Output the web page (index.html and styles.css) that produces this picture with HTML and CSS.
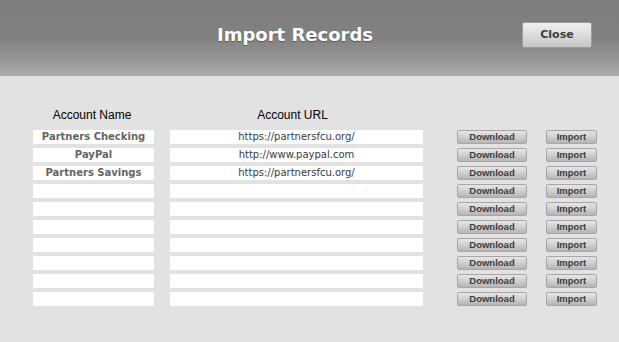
FILE: index.html
```html
<!DOCTYPE html>
<html>
<head>
<meta charset="utf-8">
<link rel="stylesheet" href="styles.css">
</head>
<body>
<div class="header">
  <div class="title">Import Records</div>
  <button class="close">Close</button>
</div>
<div class="content">
  <div class="grid">
    <div class="colhead">Account Name</div>
    <div class="colhead">Account URL</div>
    <div></div>
    <div></div>

    <div class="field name">Partners Checking</div>
    <div class="field url">https://partnersfcu.org/</div>
    <button class="btn dl">Download</button>
    <button class="btn imp">Import</button>

    <div class="field name">PayPal</div>
    <div class="field url">http://www.paypal.com</div>
    <button class="btn dl">Download</button>
    <button class="btn imp">Import</button>

    <div class="field name">Partners Savings</div>
    <div class="field url">https://partnersfcu.org/</div>
    <button class="btn dl">Download</button>
    <button class="btn imp">Import</button>

    <div class="field name"></div>
    <div class="field url"></div>
    <button class="btn dl">Download</button>
    <button class="btn imp">Import</button>

    <div class="field name"></div>
    <div class="field url"></div>
    <button class="btn dl">Download</button>
    <button class="btn imp">Import</button>

    <div class="field name"></div>
    <div class="field url"></div>
    <button class="btn dl">Download</button>
    <button class="btn imp">Import</button>

    <div class="field name"></div>
    <div class="field url"></div>
    <button class="btn dl">Download</button>
    <button class="btn imp">Import</button>

    <div class="field name"></div>
    <div class="field url"></div>
    <button class="btn dl">Download</button>
    <button class="btn imp">Import</button>

    <div class="field name"></div>
    <div class="field url"></div>
    <button class="btn dl">Download</button>
    <button class="btn imp">Import</button>

    <div class="field name"></div>
    <div class="field url"></div>
    <button class="btn dl">Download</button>
    <button class="btn imp">Import</button>
  </div>
</div>
</body>
</html>
```
FILE: styles.css
```css
html, body {
  margin: 0;
  padding: 0;
  background: #e2e2e2;
  width: 619px;
  height: 342px;
  overflow: hidden;
}
.header {
  box-sizing: border-box;
  height: 76px;
  padding: 22px 27px 0 217px;
  display: flex;
  align-items: flex-start;
  background: linear-gradient(to bottom, #7e7e7e 0%, #818181 50%, #9c9c9c 85%, #aeaeae 100%);
}
.title {
  font-family: "DejaVu Sans", sans-serif;
  font-weight: bold;
  font-size: 18px;
  line-height: 26px;
  color: #ffffff;
  text-shadow: 0 1px 1px rgba(0,0,0,0.35);
}
.close {
  margin-left: auto;
  width: 70px;
  height: 26px;
  box-sizing: border-box;
  padding: 0;
  border: 1px solid #9a9a9a;
  border-radius: 2px;
  background: linear-gradient(to bottom, #f0f0f0 0%, #dcdcdc 50%, #c6c6c6 100%);
  font-family: "DejaVu Sans", sans-serif;
  font-weight: bold;
  font-size: 11px;
  color: #3e3e3e;
  line-height: 24px;
}
.content {
  padding: 32px 0 0 33px;
}
.grid {
  display: grid;
  grid-template-columns: 121px 253px 88px 54px;
  grid-template-rows: 18px;
  grid-auto-rows: 14px;
  column-gap: 16px;
  row-gap: 4px;
}
.colhead {
  font-family: "Liberation Sans", Arial, sans-serif;
  font-size: 12px;
  line-height: 14px;
  color: #000;
  text-align: center;
  align-self: start;
}
.colhead:first-child { margin-right: 3px; }
.colhead:nth-child(2) { margin-right: 8px; }
.field {
  background: #ffffff;
  height: 14px;
  text-align: center;
  white-space: nowrap;
  overflow: hidden;
}
.name {
  font-family: "DejaVu Sans", sans-serif;
  font-weight: bold;
  font-size: 10px;
  line-height: 14px;
  color: #646464;
}
.url {
  font-family: "DejaVu Sans", sans-serif;
  font-size: 10px;
  line-height: 14px;
  color: #3a3a3a;
}
.btn {
  box-sizing: border-box;
  height: 14px;
  padding: 0;
  margin: 0;
  justify-self: end;
  border: 1px solid #a6a6a6;
  border-radius: 2px;
  background: linear-gradient(to bottom, #e6e6e6 0%, #cfcfcf 50%, #b4b4b4 100%);
  font-family: "Liberation Sans", Arial, sans-serif;
  font-weight: bold;
  font-size: 9.5px;
  line-height: 12px;
  color: #3c3c3c;
}
.dl { width: 70px; }
.imp { width: 51px; }
```
